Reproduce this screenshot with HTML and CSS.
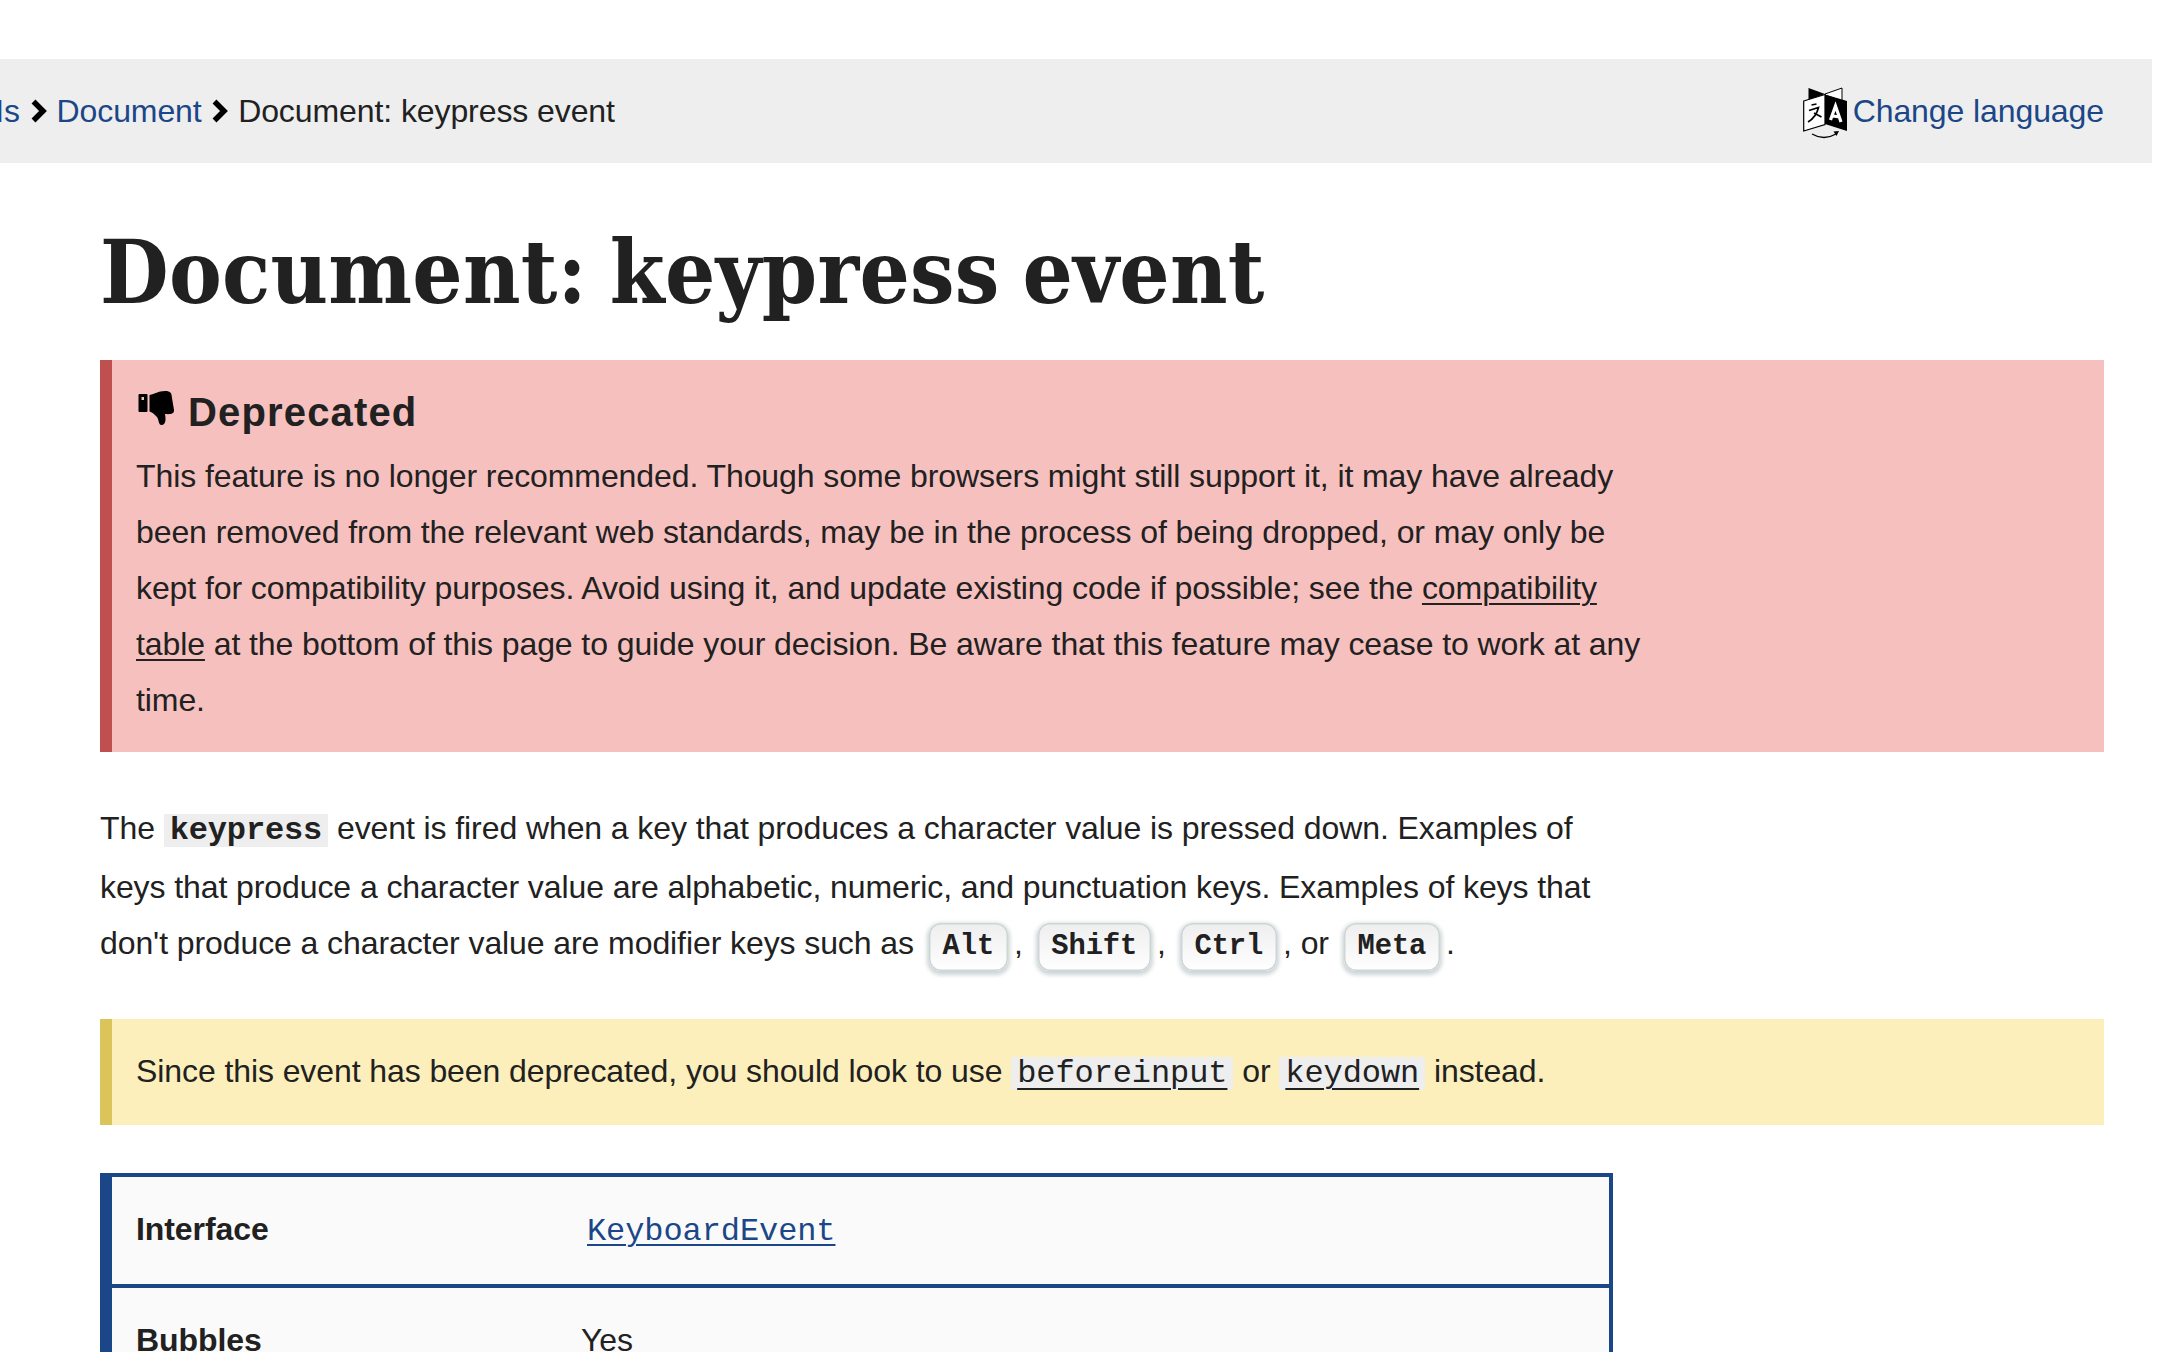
FILE: index.html
```
<!DOCTYPE html>
<html lang="en">
<head>
<meta charset="utf-8">
<title>Document: keypress event</title>
<link rel="stylesheet" href="styles.css">
</head>
<body>
<header class="topbar">
  <nav class="crumbs">
    <a class="crumb-clipped" href="#">Web APIs</a>
    <svg class="chevron" viewBox="0 0 16 24"><path d="M2.500 2.500 12 12 2.500 21.500" fill="none" stroke="#000" stroke-width="5.500"/></svg>
    <a href="#">Document</a>
    <svg class="chevron" viewBox="0 0 16 24"><path d="M2.500 2.500 12 12 2.500 21.500" fill="none" stroke="#000" stroke-width="5.500"/></svg>
    <span>Document: keypress event</span>
  </nav>
  <a class="language" href="#">
    <svg class="language-icon" viewBox="0 0 44 52">
      <path d="M5.500 1 22 7 5.500 13z"/>
      <path d="M22 7 39 1v13L22 8z" fill="#fff" stroke="#000"/>
      <path d="M.7 14 22 7.500v30L.7 44z" fill="#fff" stroke="#000" stroke-width="1.200"/>
      <path d="M22 7.500 44 14v30l-22-7z"/>
      <path d="m8.500 18 5-1M6 23.500l9.500-3C14 27 10 32 5 35M11 26l7.500 4" fill="none" stroke="#000" stroke-width="1.700"/>
      <path d="m27.500 33 5-14 5.500 16M30 29l6.500 1" fill="none" stroke="#fff" stroke-width="3.200"/>
      <path d="M9 47q12 7 24 0" fill="none" stroke="#000" stroke-width="1.400"/>
      <path d="m30.500 44.500 5.500-.5-2.500 5z"/>
    </svg>
    Change language
  </a>
</header>
<main class="article">
  <h1 class="title">Document: keypress event</h1>
  <section class="callout deprecated">
    <h2 class="callout-title">
      <svg class="thumb" viewBox="0 0 36 35"><path fill-rule="evenodd" d="M1.500 3h7q1 0 1 1v16q0 1-1 1h-7q-1 0-1-1V4q0-1 1-1zm2 3v3h2.500V6zM11.500 4C17 3 20 0 27 0c6 0 6.500 2 7 7l2 12c.5 4-4 4.500-9 4 1 5 1 11-3.500 11-3 0-2.500-5-4.500-8-3-3-5-5-7.500-5.500z"/></svg>
      Deprecated
    </h2>
    <p class="text">This feature is no longer recommended. Though some browsers might still support it, it may have already been removed from the relevant web standards, may be in the process of being dropped, or may only be kept for compatibility purposes. Avoid using it, and update existing code if possible; see the <a href="#">compatibility table</a> at the bottom of this page to guide your decision. Be aware that this feature may cease to work at any time.</p>
  </section>
  <p class="text intro">The <code class="strong">keypress</code> event is fired when a key that produces a character value is pressed down. Examples of keys that produce a character value are alphabetic, numeric, and punctuation keys. Examples of keys that don't produce a character value are modifier keys such as <kbd>Alt</kbd>, <kbd>Shift</kbd>, <kbd>Ctrl</kbd>, or <kbd>Meta</kbd>.</p>
  <section class="callout note">
    <p class="text">Since this event has been deprecated, you should look to use <code><a href="#">beforeinput</a></code> or <code><a href="#">keydown</a></code> instead.</p>
  </section>
  <div class="properties">
    <div class="property"><strong>Interface</strong><span><code class="plain"><a href="#">KeyboardEvent</a></code></span></div>
    <div class="property"><strong>Bubbles</strong><span>Yes</span></div>
  </div>
</main>
</body>
</html>
```
FILE: styles.css
```
* { box-sizing: border-box; }
html { height: 100%; overflow: hidden; }
body {
  margin: 0;
  height: 100%;
  overflow: hidden;
  padding: 59px 8px 0 0;
  background: #fff;
  color: #212121;
  font: 32px/56px "Liberation Sans", Arial, sans-serif;
  letter-spacing: -0.089px;
}
a { color: inherit; }
.topbar {
  display: flex;
  justify-content: space-between;
  align-items: center;
  height: 104px;
  padding-right: 48px;
  background: #eee;
}
.crumbs { display: flex; align-items: center; }
.crumbs a, .language { color: #1b4788; text-decoration: none; }
.crumb-clipped { width: 20px; display: flex; justify-content: flex-end; white-space: nowrap; }
.chevron { width: 16px; height: 24px; margin: 0 10px 0 10.500px; }
.language { display: flex; align-items: center; gap: 6px; }
.language-icon { width: 44px; height: 52px; margin-top: 4px; }
.article { padding: 0 48px 0 100px; }
.title {
  margin: 0;
  height: 197px;
  padding-top: 59px;
  font: bold 88px/100px "DejaVu Serif Condensed", "DejaVu Serif", serif;
  font-stretch: condensed;
  letter-spacing: 0.250px;
  word-spacing: -5px;
  white-space: nowrap;
}
.callout { border-left: 12px solid; padding: 0 24px; }
.text { margin: 0; width: 1513px; }
.deprecated { height: 391.500px; padding-top: 24px; background: #f6c0be; border-color: #c05050; }
.deprecated a { text-underline-offset: 4px; text-decoration-thickness: 2px; }
.callout-title {
  display: flex;
  align-items: flex-start;
  gap: 13px;
  margin: 0;
  height: 64px;
  padding-left: 1px;
  font-size: 40px;
  line-height: 56px;
  letter-spacing: 1.150px;
}
.thumb { width: 38px; height: 35px; margin-top: 7px; }
.intro { height: 267.500px; padding-top: 48.500px; }
code, kbd { font-family: "Liberation Mono", "Courier New", monospace; }
code {
  display: inline-block;
  height: 33px;
  padding: 0 6px;
  background: #eee;
  font-size: 32px;
  line-height: 33px;
}
code.strong { margin-bottom: 12px; font-weight: bold; letter-spacing: -0.150px; }
code a { text-underline-offset: 6px; text-decoration-thickness: 2px; }
code.plain { background: none; }
code.plain a { color: #1b4788; text-underline-offset: 4px; }
kbd {
  display: inline-block;
  height: 48px;
  margin: 0 6px;
  padding: 0 13.800px;
  border-radius: 12px;
  background: linear-gradient(#eee, #fff);
  box-shadow: inset 0 0 0 1.500px #cdd5d7, 0 2px 4px 2px #cdd5d7;
  font-size: 28.800px;
  font-weight: bold;
  line-height: 48px;
}
.note { height: 106px; padding-top: 24px; background: #fcefbb; border-color: #dbc45a; }
.properties {
  width: 1513px;
  margin-top: 48px;
  border: 4px solid #1b4788;
  border-left-width: 12px;
  background: #fafafa;
}
.property { display: grid; grid-template-columns: 445px 1fr; height: 107px; padding: 24px; }
.property + .property { border-top: 4px solid #1b4788; height: 111px; }
```
